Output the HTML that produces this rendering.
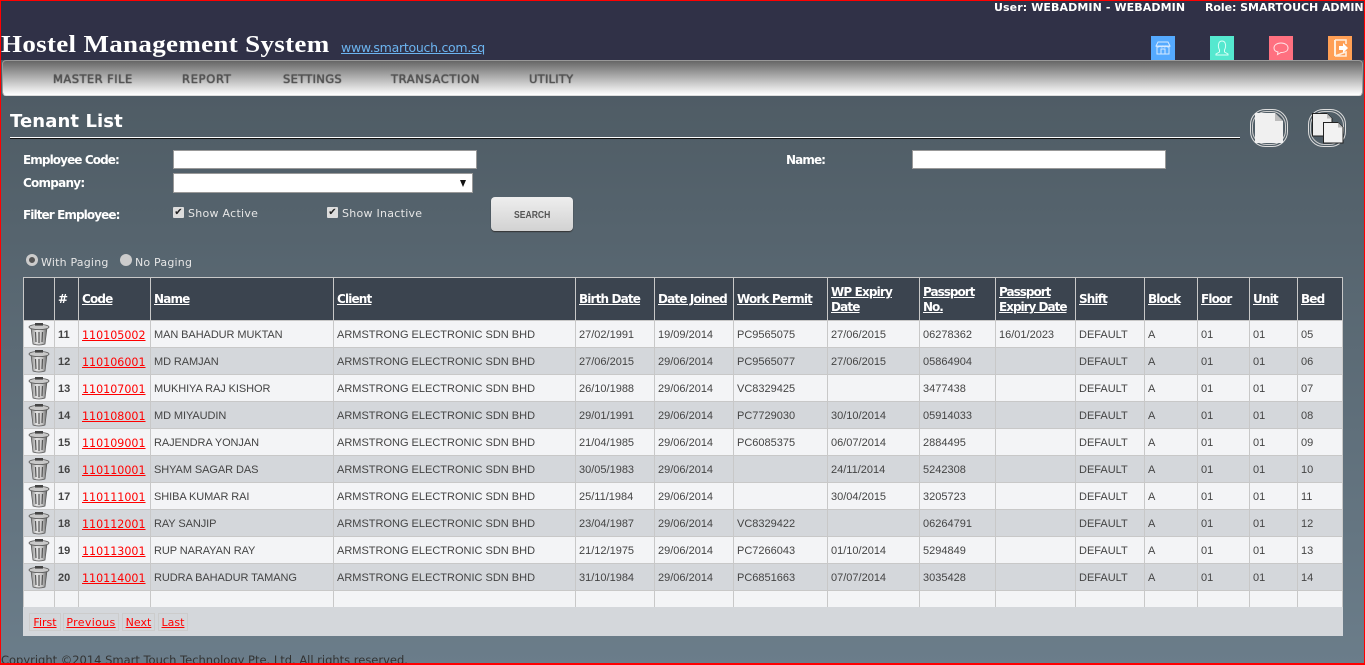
<!DOCTYPE html>
<html><head><meta charset="utf-8"><title>Tenant List</title>
<style>
html,body{margin:0;padding:0;width:1365px;height:665px;overflow:hidden}
body{position:relative;background:linear-gradient(#4f5c65 96px,#6b7d8a 665px);font-family:"DejaVu Sans",sans-serif;color:#fff}
.a{position:absolute;white-space:nowrap}
#hd{left:0;top:0;width:1365px;height:60px;background:#303147}
#menu{left:2px;top:60px;width:1359px;height:34px;border:1px solid #999;border-bottom:1px solid #ddd;border-radius:4px;background:linear-gradient(#666,#fff)}
.m{top:72px;font:11.5px "DejaVu Sans",sans-serif;color:#555;text-shadow:0 0 1px #111}
.lb{font:bold 12px "DejaVu Sans",sans-serif;letter-spacing:-.9px;color:#fff}
.ck{font:11px "DejaVu Sans",sans-serif;color:#e6e6e6;letter-spacing:.27px}
.inp{background:#fff;border:1px solid #999;box-sizing:border-box}
.cb{width:11px;height:11px;background:#ddd;border-radius:1px;font:bold 10px/11px "DejaVu Sans";color:#222;text-align:center}
.rd{width:12px;height:12px;border-radius:50%;background:#ccc}
table{position:absolute;left:23px;top:277px;border-collapse:collapse;table-layout:fixed;width:1319px;font:11px/13px "Liberation Sans",sans-serif;color:#444}
td,th{border:1px solid #c8c8c8;padding:0 0 0 3px;overflow:hidden;white-space:nowrap;text-align:left}
th{background:#3b444f;height:42px;box-sizing:border-box;font:bold 12px/15px "DejaVu Sans",sans-serif;letter-spacing:-.85px;color:#fff;white-space:normal;text-decoration:underline}
th.two{padding-top:2px}
th.pp{letter-spacing:-1px;padding-top:2px}
tr{height:27px}
td{height:26px;box-sizing:border-box;background:#f3f4f6;padding-top:2px}
tr:nth-child(even) td{background:#d4d7db}
tr.bl td{background:#f3f4f6!important;height:17px;padding-top:0}
td:nth-child(1){padding-top:0}
td:nth-child(2){font-weight:bold}
td:nth-child(3){font:11.1px "DejaVu Sans",sans-serif;color:#f00;text-decoration:underline}
td:nth-child(4){letter-spacing:-.08px}
td svg{display:block;margin-left:1px}
#pg{left:23px;top:607px;width:1320px;height:29px;background:#d4d7db}
.p{top:613px;height:16px;border:1px solid #ccc;font:11px/18px "DejaVu Sans",sans-serif;color:#f00;text-decoration:underline;text-align:center}
.bd{position:absolute;background:#f00}
</style></head><body>
<svg width="0" height="0" style="position:absolute"><defs>
<linearGradient id="tg" x1="0" x2="1" y1="0" y2="0"><stop offset="0" stop-color="#888"/><stop offset=".35" stop-color="#e4e4e4"/><stop offset=".7" stop-color="#c4c4c4"/><stop offset="1" stop-color="#666"/></linearGradient>
<symbol id="tr" viewBox="0 0 22 24"><path d="M3 6L5 22Q11 24 17 22L19 6Z" fill="url(#tg)" stroke="#555" stroke-width=".7"/><ellipse cx="11" cy="5" rx="10" ry="2.600" fill="#c8c8c8" stroke="#555" stroke-width=".8"/><rect x="7" y="1" width="8" height="2.600" fill="#444"/><path d="M7.500 10L8 20M11 10V21M14.500 10L14 20" stroke="#555" stroke-width="1.200"/></symbol>
</defs></svg>

<div class="a" id="hd"></div>
<div class="a" style="left:994px;top:1px;font:bold 11px/13px 'DejaVu Sans',sans-serif;letter-spacing:.1px">User: WEBADMIN - WEBADMIN</div>
<div class="a" style="left:1205px;top:1px;font:bold 11px/13px 'DejaVu Sans',sans-serif;letter-spacing:-.05px">Role: SMARTOUCH ADMIN</div>
<div class="a" style="left:1px;top:31px;font:bold 24px/28px 'Liberation Serif',serif;letter-spacing:.28px;transform:scaleX(1.125);transform-origin:0 0">Hostel Management System</div>
<div class="a" style="left:341px;top:40px;font:12.5px/15px 'DejaVu Sans',sans-serif;color:#6cb4f0;text-decoration:underline;letter-spacing:-.27px">www.smartouch.com.sq</div>

<svg class="a" style="left:1151px;top:36px" width="24" height="24"><rect width="24" height="24" fill="#55aaff"/><path d="M7 6H17L19 10H5ZM6 10V18H18V10M10 18V13H14V18M5 10Q7 12 9 10Q11 12 12 10Q14 12 15 10Q17 12 19 10" fill="none" stroke="#d5e9ff" stroke-width="1"/></svg>
<svg class="a" style="left:1210px;top:36px" width="24" height="24"><rect width="24" height="24" fill="#55e8cf"/><path d="M9.500 14Q8 11 8.500 8.500Q9 5 12 5Q15 5 15.500 8.500Q16 11 14.500 14V16L18 18V19H6V18L9.500 16Z" fill="none" stroke="#dcfff7" stroke-width="1"/></svg>
<svg class="a" style="left:1269px;top:36px" width="24" height="24"><rect width="24" height="24" fill="#ff7080"/><path d="M12 7C16 7 19 9 19 12C19 15 16 16.500 12 16.500L8.500 18.500L9 16C6.500 15.500 5 14 5 12C5 9 8 7 12 7Z" fill="none" stroke="#ffe5e8" stroke-width="1"/></svg>
<svg class="a" style="left:1328px;top:36px" width="24" height="24"><rect width="24" height="24" fill="#ff9f55"/><path d="M7 4H18V8M18 16V20H7Z" fill="none" stroke="#ffeedd" stroke-width="1.600"/><path d="M7 4L7 20" stroke="#ffeedd" stroke-width="2"/><path d="M11 10H15V7L20 12L15 17V14H11Z" fill="#fff"/></svg>

<div class="a" id="menu"></div>
<div class="a m" style="left:53px;letter-spacing:.45px">MASTER FILE</div>
<div class="a m" style="left:182px;letter-spacing:.7px">REPORT</div>
<div class="a m" style="left:283px;letter-spacing:.3px">SETTINGS</div>
<div class="a m" style="left:391px;letter-spacing:.6px">TRANSACTION</div>
<div class="a m" style="left:529px;letter-spacing:.25px">UTILITY</div>

<div class="a" style="left:10px;top:110px;font:bold 18px/23px 'DejaVu Sans',sans-serif;letter-spacing:.1px">Tenant List</div>
<div class="a" style="left:10px;top:137px;width:1230px;height:1px;background:#fff;border-bottom:1px solid #111"></div>

<svg class="a" style="left:1249px;top:108px" width="40" height="40"><rect x="1.500" y="1.500" width="37" height="37" rx="15" fill="none" stroke="#ddd"/><rect x="3.500" y="3.500" width="33" height="33" rx="14" fill="none" stroke="#ccc"/><path d="M6 5H26L34 13V35H6Z" fill="#f0f0f0"/><path d="M26 5V13H34Z" fill="#bbb"/></svg>
<svg class="a" style="left:1307px;top:108px" width="40" height="40"><rect x="1.500" y="1.500" width="37" height="37" rx="15" fill="none" stroke="#ddd"/><rect x="3.500" y="3.500" width="33" height="33" rx="14" fill="none" stroke="#ccc"/><path d="M5.500 5.500H20L25 10.500V28H5.500Z" fill="#eee" stroke="#222"/><path d="M20 5.500V10.500H25Z" fill="#bbb"/><path d="M16.500 14.500H31L36 19.500V35H16.500Z" fill="#f2f2f2" stroke="#222"/><path d="M31 14.500V19.500H36Z" fill="#bbb"/></svg>

<div class="a lb" style="left:23px;top:153px">Employee Code:</div>
<div class="a inp" style="left:173px;top:150px;width:304px;height:19px"></div>
<div class="a lb" style="left:786px;top:153px">Name:</div>
<div class="a inp" style="left:912px;top:150px;width:254px;height:19px"></div>
<div class="a lb" style="left:23px;top:176px;letter-spacing:-.75px">Company:</div>
<div class="a inp" style="left:173px;top:173px;width:300px;height:20px"></div>
<div class="a" style="left:460px;top:180px;width:0;height:0;border-left:3.500px solid transparent;border-right:3.500px solid transparent;border-top:7px solid #111"></div>
<div class="a lb" style="left:23px;top:208px">Filter Employee:</div>
<div class="a cb" style="left:173px;top:207px">✔</div>
<div class="a ck" style="left:188px;top:207px">Show Active</div>
<div class="a cb" style="left:327px;top:207px">✔</div>
<div class="a ck" style="left:342px;top:207px">Show Inactive</div>
<div class="a" style="left:491px;top:197px;width:82px;height:34px;border-radius:4px;background:linear-gradient(#eee,#d2d2d2);box-shadow:0 1px 1px #333;font:bold 10.500px/36px 'Liberation Sans',sans-serif;color:#555;text-align:center"><span style="display:inline-block;transform:scaleX(.82)">SEARCH</span></div>
<div class="a rd" style="left:26px;top:254px;box-sizing:border-box;border:3px solid #ccc;background:#555"></div>
<div class="a ck" style="left:41px;top:256px;letter-spacing:.2px">With Paging</div>
<div class="a rd" style="left:120px;top:254px"></div>
<div class="a ck" style="left:135px;top:256px;letter-spacing:.2px">No Paging</div>

<table>
<colgroup><col style="width:31px"><col style="width:24px"><col style="width:72px"><col style="width:183px"><col style="width:242px"><col style="width:79px"><col style="width:79px"><col style="width:94px"><col style="width:92px"><col style="width:76px"><col style="width:80px"><col style="width:69px"><col style="width:53px"><col style="width:52px"><col style="width:48px"><col style="width:45px"></colgroup>
<thead><tr style="height:43px"><th></th><th style="text-decoration:none">#</th><th>Code</th><th>Name</th><th>Client</th><th>Birth Date</th><th>Date Joined</th><th>Work Permit</th><th class="two">WP Expiry Date</th><th class="pp">Passport<br>No.</th><th class="pp">Passport<br>Expiry Date</th><th>Shift</th><th>Block</th><th>Floor</th><th>Unit</th><th>Bed</th></tr></thead>
<tbody>
<tr><td><svg width="22" height="24"><use href="#tr"/></svg></td><td>11</td><td>110105002</td><td>MAN BAHADUR MUKTAN</td><td>ARMSTRONG ELECTRONIC SDN BHD</td><td>27/02/1991</td><td>19/09/2014</td><td>PC9565075</td><td>27/06/2015</td><td>06278362</td><td>16/01/2023</td><td>DEFAULT</td><td>A</td><td>01</td><td>01</td><td>05</td></tr>
<tr><td><svg width="22" height="24"><use href="#tr"/></svg></td><td>12</td><td>110106001</td><td>MD RAMJAN</td><td>ARMSTRONG ELECTRONIC SDN BHD</td><td>27/06/2015</td><td>29/06/2014</td><td>PC9565077</td><td>27/06/2015</td><td>05864904</td><td></td><td>DEFAULT</td><td>A</td><td>01</td><td>01</td><td>06</td></tr>
<tr><td><svg width="22" height="24"><use href="#tr"/></svg></td><td>13</td><td>110107001</td><td>MUKHIYA RAJ KISHOR</td><td>ARMSTRONG ELECTRONIC SDN BHD</td><td>26/10/1988</td><td>29/06/2014</td><td>VC8329425</td><td></td><td>3477438</td><td></td><td>DEFAULT</td><td>A</td><td>01</td><td>01</td><td>07</td></tr>
<tr><td><svg width="22" height="24"><use href="#tr"/></svg></td><td>14</td><td>110108001</td><td>MD MIYAUDIN</td><td>ARMSTRONG ELECTRONIC SDN BHD</td><td>29/01/1991</td><td>29/06/2014</td><td>PC7729030</td><td>30/10/2014</td><td>05914033</td><td></td><td>DEFAULT</td><td>A</td><td>01</td><td>01</td><td>08</td></tr>
<tr><td><svg width="22" height="24"><use href="#tr"/></svg></td><td>15</td><td>110109001</td><td>RAJENDRA YONJAN</td><td>ARMSTRONG ELECTRONIC SDN BHD</td><td>21/04/1985</td><td>29/06/2014</td><td>PC6085375</td><td>06/07/2014</td><td>2884495</td><td></td><td>DEFAULT</td><td>A</td><td>01</td><td>01</td><td>09</td></tr>
<tr><td><svg width="22" height="24"><use href="#tr"/></svg></td><td>16</td><td>110110001</td><td>SHYAM SAGAR DAS</td><td>ARMSTRONG ELECTRONIC SDN BHD</td><td>30/05/1983</td><td>29/06/2014</td><td></td><td>24/11/2014</td><td>5242308</td><td></td><td>DEFAULT</td><td>A</td><td>01</td><td>01</td><td>10</td></tr>
<tr><td><svg width="22" height="24"><use href="#tr"/></svg></td><td>17</td><td>110111001</td><td>SHIBA KUMAR RAI</td><td>ARMSTRONG ELECTRONIC SDN BHD</td><td>25/11/1984</td><td>29/06/2014</td><td></td><td>30/04/2015</td><td>3205723</td><td></td><td>DEFAULT</td><td>A</td><td>01</td><td>01</td><td>11</td></tr>
<tr><td><svg width="22" height="24"><use href="#tr"/></svg></td><td>18</td><td>110112001</td><td>RAY SANJIP</td><td>ARMSTRONG ELECTRONIC SDN BHD</td><td>23/04/1987</td><td>29/06/2014</td><td>VC8329422</td><td></td><td>06264791</td><td></td><td>DEFAULT</td><td>A</td><td>01</td><td>01</td><td>12</td></tr>
<tr><td><svg width="22" height="24"><use href="#tr"/></svg></td><td>19</td><td>110113001</td><td>RUP NARAYAN RAY</td><td>ARMSTRONG ELECTRONIC SDN BHD</td><td>21/12/1975</td><td>29/06/2014</td><td>PC7266043</td><td>01/10/2014</td><td>5294849</td><td></td><td>DEFAULT</td><td>A</td><td>01</td><td>01</td><td>13</td></tr>
<tr><td><svg width="22" height="24"><use href="#tr"/></svg></td><td>20</td><td>110114001</td><td>RUDRA BAHADUR TAMANG</td><td>ARMSTRONG ELECTRONIC SDN BHD</td><td>31/10/1984</td><td>29/06/2014</td><td>PC6851663</td><td>07/07/2014</td><td>3035428</td><td></td><td>DEFAULT</td><td>A</td><td>01</td><td>01</td><td>14</td></tr>
<tr class="bl" style="height:17px"><td></td><td></td><td></td><td></td><td></td><td></td><td></td><td></td><td></td><td></td><td></td><td></td><td></td><td></td><td></td><td></td></tr>
</tbody></table>
<div class="a" id="pg"></div>
<div class="a p" style="left:29px;width:30px">First</div>
<div class="a p" style="left:63px;width:54px;letter-spacing:.35px">Previous</div>
<div class="a p" style="left:122px;width:31px">Next</div>
<div class="a p" style="left:158px;width:28px">Last</div>
<div class="a" style="left:1px;top:653px;font:11.5px/14px 'DejaVu Sans',sans-serif;color:#333;letter-spacing:-.01px">Copyright ©2014 Smart Touch Technology Pte. Ltd. All rights reserved.</div>

<div class="bd" style="left:0;top:0;width:1365px;height:1px"></div>
<div class="bd" style="left:0;top:663px;width:1365px;height:2px"></div>
<div class="bd" style="left:0;top:0;width:1px;height:665px"></div>
<div class="bd" style="left:1364px;top:0;width:1px;height:665px"></div>
</body></html>
